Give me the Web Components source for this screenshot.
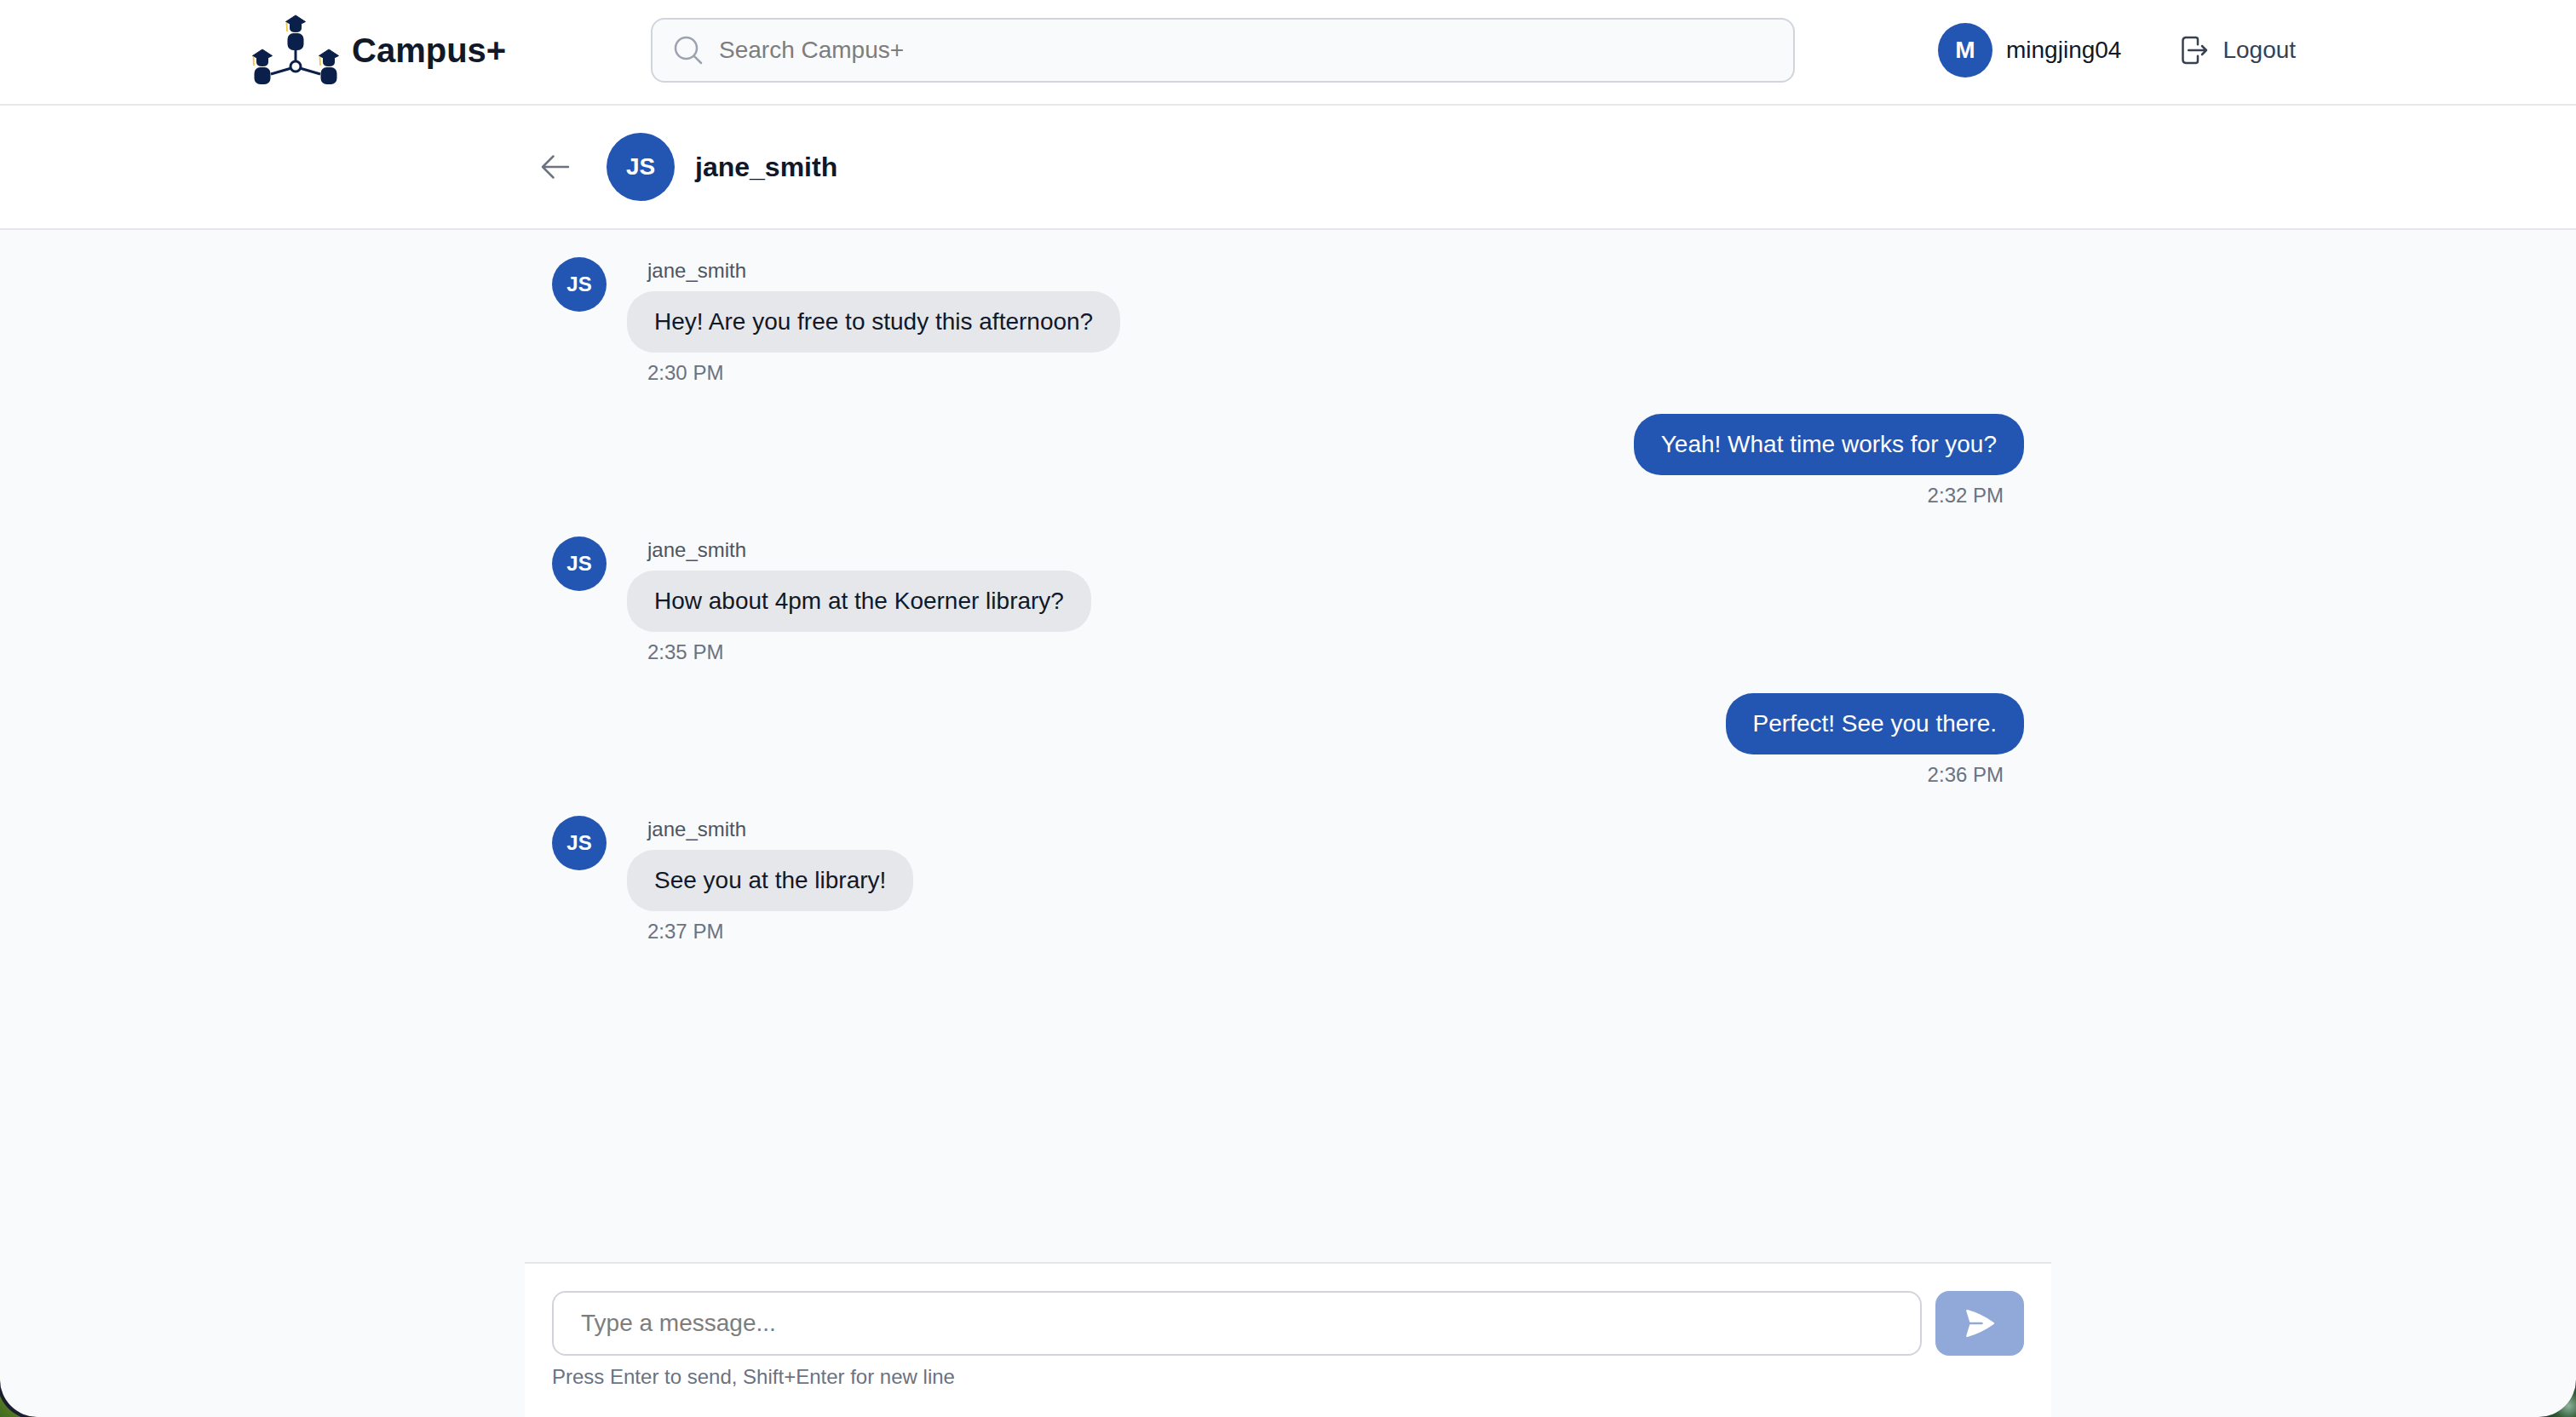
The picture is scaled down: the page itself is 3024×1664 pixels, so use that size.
<!DOCTYPE html>
<html lang="en">
<head>
<meta charset="utf-8">
<title>Campus+</title>
<style>
  html, body { margin: 0; height: 100%; }
  body {
    font-family: "Liberation Sans", Arial, sans-serif;
    background: #f9fafb;
    color: #111827;
    overflow: hidden;
  }
</style>
</head>
<body>
<chat-page>
  <app-header slot="top" username="mingjing04" initial="M"></app-header>
  <chat-header slot="top" name="jane_smith" initials="JS"></chat-header>
  <chat-message from="jane_smith" initials="JS" time="2:30 PM">Hey! Are you free to study this afternoon?</chat-message>
  <chat-message own time="2:32 PM">Yeah! What time works for you?</chat-message>
  <chat-message from="jane_smith" initials="JS" time="2:35 PM">How about 4pm at the Koerner library?</chat-message>
  <chat-message own time="2:36 PM">Perfect! See you there.</chat-message>
  <chat-message from="jane_smith" initials="JS" time="2:37 PM">See you at the library!</chat-message>
  <chat-composer slot="bottom"></chat-composer>
</chat-page>
<window-corners></window-corners>

<script>
class UserAvatar extends HTMLElement {
    constructor() {
        super();
        this.shadowDOM = this.attachShadow({ mode: 'open' });
    }

    connectedCallback() {
        const size = this.getAttribute('size') || 64;
        const font = this.getAttribute('font') || 24;
        this.shadowDOM.innerHTML = `
            <style>
                :host {
                    display: flex;
                    flex: none;
                    align-items: center;
                    justify-content: center;
                    width: ${size}px;
                    height: ${size}px;
                    border-radius: 50%;
                    background: #2356b2;
                    color: #ffffff;
                    font-size: ${font}px;
                    font-weight: 700;
                }
            </style>
            <slot></slot>
        `;
    }
}

class CampusLogo extends HTMLElement {
    constructor() {
        super();
        this.shadowDOM = this.attachShadow({ mode: 'open' });
    }

    figure(cx, top) {
        return `
            <g transform="translate(${cx} ${top})">
                <path d="M-7 10V15Q-7 20 0 20Q7 20 7 15V10Z" fill="#0a1f4a"/>
                <path d="M0 0L11.5 7.5L0 13L-11.5 7.5Z" fill="#0a1f4a" stroke="#0a1f4a" stroke-linejoin="round"/>
                <path d="M-10.5 8.5L-10 19" stroke="#f2c544" stroke-width="1.8"/>
                <rect x="-9.5" y="21" width="19" height="20" rx="7" fill="#0a1f4a"/>
            </g>`;
    }

    connectedCallback() {
        this.shadowDOM.innerHTML = `
            <style>
                :host {
                    display: flex;
                    flex: none;
                    align-items: center;
                    width: 468px;
                }
                svg {
                    flex: none;
                    width: 120px;
                    height: 95px;
                    margin: -3px 0 0 -6px;
                }
                span {
                    margin-left: 3px;
                    font-size: 40px;
                    font-weight: 700;
                    color: #111827;
                }
            </style>
            <svg viewBox="0 0 120 95">
                ${this.figure(57, 8)}
                ${this.figure(18, 48)}
                ${this.figure(96, 48)}
                <path d="M57 49V62M28 77L52 70M86 77L62 70" stroke="#0a1f4a" stroke-width="3" fill="none"/>
                <circle cx="57" cy="68" r="6" fill="#ffffff" stroke="#0a1f4a" stroke-width="3"/>
            </svg>
            <span>Campus+</span>
        `;
    }
}

class SearchBox extends HTMLElement {
    constructor() {
        super();
        this.shadowDOM = this.attachShadow({ mode: 'open' });
    }

    connectedCallback() {
        this.shadowDOM.innerHTML = `
            <style>
                :host {
                    display: flex;
                    flex: none;
                    box-sizing: border-box;
                    align-items: center;
                    gap: 16px;
                    width: 1343px;
                    height: 76px;
                    padding-left: 22px;
                    border: 2px solid #d1d5db;
                    border-radius: 16px;
                    background: #f9fafb;
                    color: #7d7d7d;
                    font-size: 28px;
                }
                svg {
                    width: 40px;
                    height: 40px;
                    color: #9ca3af;
                }
            </style>
            <svg viewBox="0 0 24 24" fill="none" stroke="currentColor" stroke-width="1.5" stroke-linecap="round" stroke-linejoin="round">
                <path d="m21 21-5.197-5.197m0 0A7.5 7.5 0 1 0 5.196 5.196a7.5 7.5 0 0 0 10.607 10.607Z"/>
            </svg>
            <span>Search Campus+</span>
        `;
    }
}

class AppHeader extends HTMLElement {
    constructor() {
        super();
        this.shadowDOM = this.attachShadow({ mode: 'open' });
    }

    connectedCallback() {
        this.shadowDOM.innerHTML = `
            <style>
                :host {
                    display: flex;
                    flex: none;
                    box-sizing: border-box;
                    align-items: center;
                    height: 124px;
                    padding: 0 296px 4px;
                    border-bottom: 2px solid #e5e7eb;
                    background: #ffffff;
                }
                .user {
                    display: flex;
                    align-items: center;
                    gap: 16px;
                    margin-left: 168px;
                    font-size: 28px;
                    color: #111827;
                }
                .logout {
                    display: flex;
                    align-items: center;
                    gap: 16px;
                    margin-left: 65px;
                    font-size: 28px;
                    color: #374151;
                }
                .logout svg {
                    width: 40px;
                    height: 40px;
                    margin-right: -2px;
                }
            </style>
            <campus-logo></campus-logo>
            <search-box></search-box>
            <div class="user">
                <user-avatar size="64" font="28">${this.getAttribute('initial')}</user-avatar>
                <span>${this.getAttribute('username')}</span>
            </div>
            <div class="logout">
                <svg viewBox="0 0 24 24" fill="none" stroke="currentColor" stroke-width="1.5" stroke-linecap="round" stroke-linejoin="round">
                    <path d="M15 8V4.5A1.5 1.5 0 0 0 13.5 3H6.5A2.25 2.25 0 0 0 4.5 5.25V18.75A2.25 2.25 0 0 0 6.5 21H13.5A1.5 1.5 0 0 0 15 19.5V16"/>
                    <path d="M8.5 12H20.5M18 9L21 12L18 15"/>
                </svg>
                <span>Logout</span>
            </div>
        `;
    }
}

class ChatHeader extends HTMLElement {
    constructor() {
        super();
        this.shadowDOM = this.attachShadow({ mode: 'open' });
    }

    connectedCallback() {
        const name = this.getAttribute('name');
        this.shadowDOM.innerHTML = `
            <style>
                :host {
                    display: block;
                    flex: none;
                    box-sizing: border-box;
                    height: 146px;
                    border-bottom: 2px solid #e5e7eb;
                    background: #ffffff;
                }
                .wrap {
                    display: flex;
                    box-sizing: border-box;
                    align-items: center;
                    width: 1792px;
                    height: 144px;
                    margin: 0 auto;
                    padding-left: 16px;
                }
                svg {
                    flex: none;
                    width: 40px;
                    height: 40px;
                    margin-right: 40px;
                    color: #6b7280;
                }
                .name {
                    margin-left: 24px;
                    font-size: 32px;
                    font-weight: 700;
                    color: #111827;
                }
            </style>
            <div class="wrap">
                <svg viewBox="0 0 24 24" fill="none" stroke="currentColor" stroke-width="1.5" stroke-linecap="round" stroke-linejoin="round">
                    <path d="M10.5 19.5 3 12m0 0 7.5-7.5M3 12h18"/>
                </svg>
                <user-avatar size="80" font="28">${this.getAttribute('initials')}</user-avatar>
                <span class="name">${name}</span>
            </div>
        `;
    }
}

class ChatMessage extends HTMLElement {
    constructor() {
        super();
        this.shadowDOM = this.attachShadow({ mode: 'open' });
    }

    connectedCallback() {
        const own = this.hasAttribute('own');
        const avatar = own ? '' : `<user-avatar size="64" font="24">${this.getAttribute('initials')}</user-avatar>`;
        const from = own ? '' : `<div class="from">${this.getAttribute('from')}</div>`;
        this.shadowDOM.innerHTML = `
            <style>
                :host {
                    display: flex;
                    gap: 24px;
                    justify-content: ${own ? 'flex-end' : 'flex-start'};
                }
                .body {
                    display: flex;
                    flex-direction: column;
                    align-items: ${own ? 'flex-end' : 'flex-start'};
                    gap: 8px;
                }
                .from, .time {
                    padding: 0 24px;
                    font-size: 24px;
                    line-height: 32px;
                }
                .from { color: #4b5563; }
                .time { color: #6b7280; }
                .bubble {
                    padding: 16px 32px;
                    border-radius: 32px;
                    background: ${own ? '#2356b2' : '#e5e7eb'};
                    color: ${own ? '#ffffff' : '#111827'};
                    font-size: 28px;
                    line-height: 40px;
                }
            </style>
            ${avatar}
            <div class="body">
                ${from}
                <div class="bubble"><slot></slot></div>
                <div class="time">${this.getAttribute('time')}</div>
            </div>
        `;
    }
}

class ChatComposer extends HTMLElement {
    constructor() {
        super();
        this.shadowDOM = this.attachShadow({ mode: 'open' });
    }

    connectedCallback() {
        this.shadowDOM.innerHTML = `
            <style>
                :host {
                    display: block;
                    box-sizing: border-box;
                    height: 182px;
                    padding: 32px 32px 0;
                    border-top: 2px solid #e5e7eb;
                    background: #ffffff;
                }
                .row {
                    display: flex;
                    gap: 16px;
                }
                .field {
                    display: flex;
                    flex: 1;
                    box-sizing: border-box;
                    align-items: center;
                    height: 76px;
                    padding-left: 32px;
                    border: 2px solid #d1d5db;
                    border-radius: 16px;
                    background: #ffffff;
                    color: #7d7d7d;
                    font-size: 28px;
                }
                .send {
                    display: flex;
                    flex: none;
                    align-items: center;
                    justify-content: center;
                    width: 104px;
                    height: 76px;
                    border-radius: 16px;
                    background: #91a9d8;
                    color: #ffffff;
                }
                .send svg {
                    width: 40px;
                    height: 40px;
                }
                .hint {
                    margin-top: 9px;
                    font-size: 24px;
                    line-height: 32px;
                    color: #6b7280;
                }
            </style>
            <div class="row">
                <div class="field">Type a message...</div>
                <div class="send">
                    <svg viewBox="0 0 24 24" fill="currentColor">
                        <path d="M3.478 2.404a.75.75 0 0 0-.926.941l2.432 7.905H13.5a.75.75 0 0 1 0 1.5H4.984l-2.432 7.905a.75.75 0 0 0 .926.94 60.519 60.519 0 0 0 18.445-8.986.75.75 0 0 0 0-1.218A60.517 60.517 0 0 0 3.478 2.404Z"/>
                    </svg>
                </div>
            </div>
            <div class="hint">Press Enter to send, Shift+Enter for new line</div>
        `;
    }
}

class ChatPage extends HTMLElement {
    constructor() {
        super();
        this.shadowDOM = this.attachShadow({ mode: 'open' });
    }

    connectedCallback() {
        this.shadowDOM.innerHTML = `
            <style>
                :host {
                    display: flex;
                    flex-direction: column;
                    height: 100vh;
                }
                .column {
                    display: flex;
                    flex: 1;
                    flex-direction: column;
                    box-sizing: border-box;
                    width: 1792px;
                    min-height: 0;
                    margin: 0 auto;
                }
                .messages {
                    display: flex;
                    flex: 1;
                    flex-direction: column;
                    gap: 32px;
                    min-height: 0;
                    padding: 32px;
                }
            </style>
            <slot name="top"></slot>
            <div class="column">
                <div class="messages"><slot></slot></div>
                <slot name="bottom"></slot>
            </div>
        `;
    }
}

// rounded bottom corners of the browser window, wallpaper showing behind them
class WindowCorners extends HTMLElement {
    constructor() {
        super();
        this.shadowDOM = this.attachShadow({ mode: 'open' });
    }

    connectedCallback() {
        this.shadowDOM.innerHTML = `
            <style>
                .corner {
                    position: fixed;
                    bottom: 0;
                    width: 44px;
                    height: 44px;
                    overflow: hidden;
                }
                .corner::after {
                    content: "";
                    position: absolute;
                    inset: 0;
                    background: #f9fafb;
                }
                .left {
                    left: 0;
                    background: linear-gradient(45deg, #3f6b22, #5f7f22 40%, #2f4f24);
                }
                .left::after {
                    border-bottom-left-radius: 44px;
                    box-shadow: -3px 3px 0 #1b1e30;
                }
                .right {
                    right: 0;
                    background: radial-gradient(circle at 80% 70%, #8fb39a 0, #2f5a35 35%, #16301f 70%);
                }
                .right::after {
                    border-bottom-right-radius: 44px;
                }
            </style>
            <div class="corner left"></div>
            <div class="corner right"></div>
        `;
    }
}

customElements.define('user-avatar', UserAvatar);
customElements.define('campus-logo', CampusLogo);
customElements.define('search-box', SearchBox);
customElements.define('app-header', AppHeader);
customElements.define('chat-header', ChatHeader);
customElements.define('chat-message', ChatMessage);
customElements.define('chat-composer', ChatComposer);
customElements.define('chat-page', ChatPage);
customElements.define('window-corners', WindowCorners);
</script>
</body>
</html>
